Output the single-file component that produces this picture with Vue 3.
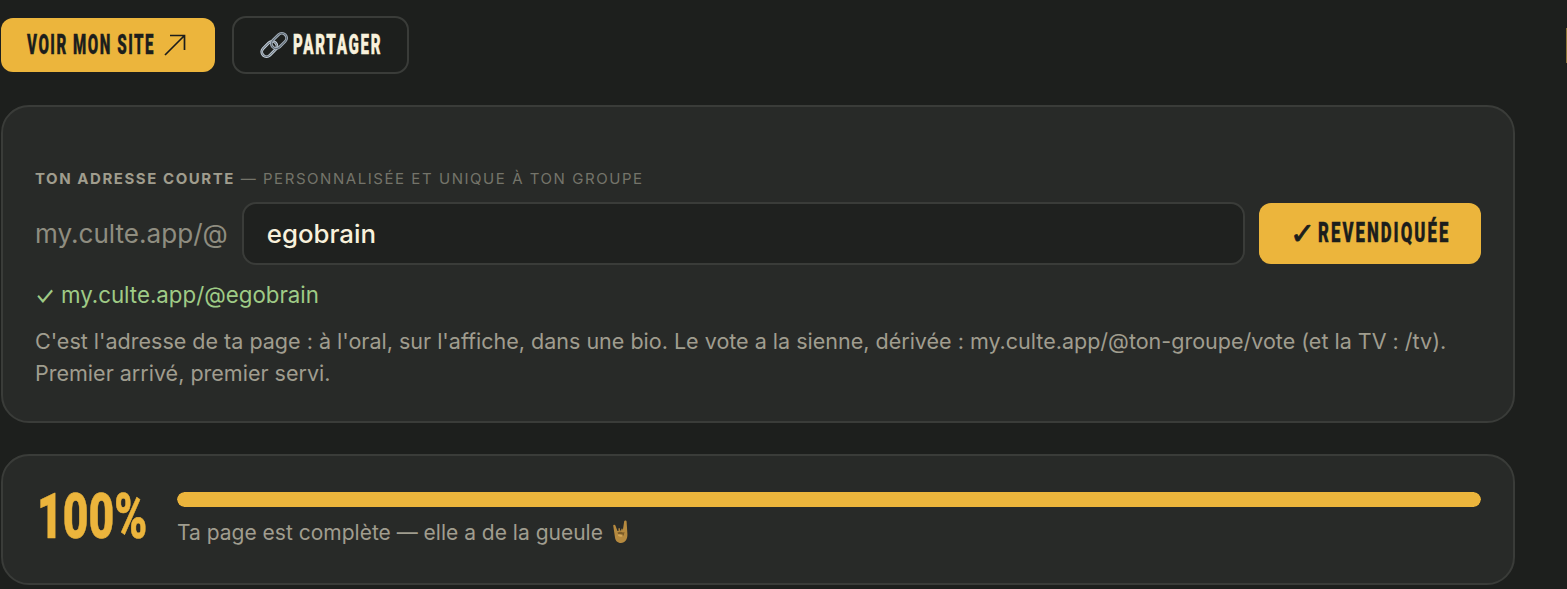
<script setup>
const title = 'TON ADRESSE COURTE'
const subtitle = ' — PERSONNALISÉE ET UNIQUE À TON GROUPE'
</script>

<template>
  <div class="page">
    <span class="sliver"></span>
    <div class="actions">
      <a class="btn primary view"><span class="cond c-view">VOIR MON SITE</span>
        <svg class="arrow" width="22" height="22" viewBox="0 0 22 22" fill="none" stroke="#1c1e1c" stroke-width="1.700"><path d="M1 21 20.500 1.500M6 1.500h14.500V16"/></svg>
      </a>
      <a class="btn ghost">
        <svg class="link" width="28" height="28" viewBox="0 0 28 28" fill="none">
          <g transform="rotate(-45 9 18)">
            <rect x="0.500" y="13.500" width="17.500" height="9.500" rx="4.750" stroke="#c9d4de" stroke-width="2.800"/>
            <rect x="0.500" y="13.500" width="17.500" height="9.500" rx="4.750" stroke="#6d7883" stroke-width="1"/>
          </g>
          <g transform="rotate(-45 19 9.500)">
            <rect x="10" y="5" width="17.500" height="9.500" rx="4.750" stroke="#aab6c1" stroke-width="2.800"/>
            <rect x="10" y="5" width="17.500" height="9.500" rx="4.750" stroke="#5d6873" stroke-width="1"/>
          </g>
        </svg>
        <span class="cond c-share">PARTAGER</span>
      </a>
    </div>

    <section class="card address">
      <div class="label"><b>{{ title }}</b>{{ subtitle }}</div>
      <div class="row">
        <span class="prefix">my.culte.app/@</span>
        <input class="field" value="egobrain" />
        <button class="btn primary claim"><span class="check">✓</span><span class="cond c-claim">REVENDIQUÉE</span></button>
      </div>
      <div class="ok"><span class="ok-mark">✓</span> my.culte.app/@egobrain</div>
      <p class="help">C'est l'adresse de ta page : à l'oral, sur l'affiche, dans une bio. Le vote a la sienne, dérivée : my.culte.app/@ton-groupe/vote (et la TV : /tv). Premier arrivé, premier servi.</p>
    </section>

    <section class="card progress">
      <div class="pct"><span class="pct-text">100%</span></div>
      <div class="meter">
        <div class="track"><div class="fill" style="width: 100%"></div></div>
        <div class="note">Ta page est complète — elle a de la gueule
          <svg class="horns" width="17" height="24" viewBox="0 0 17 24">
            <path fill="#b68a3f" d="M1.200 5.500c.1-1 1.900-1.200 2.200-.1L5.500 11h1V8.500c.1-.8 1.100-.8 1.300 0l.2 2h1.200l.2-1.500c.1-.8 1-.8 1.200 0l.2 1.500L12.200 1.200c.2-1.100 2.300-1 2.400.2L15.400 14c.2 5.500-2.300 9-6.400 9-3.600 0-5.500-2.300-6-5.500z"/>
            <path fill="#7d5d29" d="M5.500 12.500c1.800-1 4-1 5.500 0l1.500-.5-.8 3.500c-1.500.7-3.700.5-5-.3z"/>
            <path fill="#d3a657" d="M5.800 14.500c1.500-.5 3.500-.4 5 .3l-.6 1.700c-1.400.4-2.800.2-4-.4z"/>
          </svg>
        </div>
      </div>
    </section>
  </div>
</template>

<style>
html, body { margin: 0; background: #1d1f1d; }
</style>

<style scoped>
.page { position: relative; box-sizing: border-box; width: 1567px; height: 589px; overflow: hidden; padding: 16px 0 0 1px; background: #1d1f1d; font-family: Inter, "Liberation Sans", sans-serif; font-variant-ligatures: no-contextual; }
.sliver { position: absolute; right: 0; top: 28px; width: 1px; height: 35px; background: #8a7236; }
.actions { display: flex; align-items: center; gap: 17px; height: 58px; }
.btn { display: inline-flex; align-items: center; box-sizing: border-box; font-family: Roboto, "Liberation Sans", sans-serif; font-weight: 900; cursor: pointer; }
.cond { display: inline-block; font-size: 27px; line-height: 1; white-space: nowrap; transform-origin: left center; -webkit-text-stroke: .4px currentColor; }
.c-view { width: 128px; letter-spacing: 2.700px; transform: scaleX(.56); }
.c-share { width: 88px; letter-spacing: 3px; transform: scaleX(.56); }
.c-claim { width: 130px; letter-spacing: 3.300px; transform: scaleX(.62); }
.primary { background: #ecb53c; color: #1c1e1c; border: none; border-radius: 12px; }
.view { width: 214px; height: 54px; padding-left: 26px; gap: 9px; }
.ghost { width: 177px; height: 58px; padding-left: 26px; border: 2px solid #3a3c39; border-radius: 14px; color: #f8f1dc; gap: 5px; }
.card { box-sizing: border-box; width: 1514px; background: #282a28; border: 2px solid #3a3c39; border-radius: 28px; }
.address { height: 318px; margin-top: 31px; padding: 62px 32px 0; }
.label { font-size: 15px; line-height: 20px; letter-spacing: 1.550px; color: #74746a; }
.label b { color: #a09d8e; font-weight: 700; }
.row { display: flex; align-items: center; gap: 14px; margin-top: 13px; }
.prefix { font-size: 26.100px; color: #8f8d80; white-space: nowrap; }
.field { flex: 1; min-width: 0; height: 63px; box-sizing: border-box; padding: 0 23px; background: #1f211f; border: 2px solid #3a3c39; border-radius: 14px; color: #f8f1dc; font: 500 25.800px Inter, sans-serif; outline: none; }
.claim { width: 222px; height: 61px; padding-left: 31px; gap: 9px; }
.check { width: 19px; font-size: 30px; line-height: 1; font-family: "DejaVu Sans", sans-serif; font-weight: 700; -webkit-text-stroke: .8px #1c1e1c; }
.ok { margin-top: 15px; font-size: 22.300px; line-height: 30px; color: #9fcb86; }
.ok-mark { display: inline-block; transform: scaleY(1.2); }
.help { margin: 15px 0 0; font-size: 21.530px; line-height: 32px; color: #a09d8f; }
.progress { display: flex; align-items: center; gap: 30px; height: 131px; margin-top: 31px; padding: 0 32px 0 34px; }
.pct { width: 110px; padding-bottom: 6px; font-family: Roboto, "Liberation Sans", sans-serif; font-weight: 900; font-size: 63px; color: #ecb53c; line-height: 1; }
.pct-text { display: inline-block; transform: scaleX(.705); transform-origin: left center; -webkit-text-stroke: .6px currentColor; }
.meter { flex: 1; min-width: 0; }
.track { height: 15px; border-radius: 8px; background: #1d1f1d; overflow: hidden; }
.fill { height: 100%; background: #ecb53c; border-radius: 8px; }
.note { margin-top: 12px; font-size: 21px; line-height: 28px; color: #a09d8f; display: flex; align-items: center; gap: 9px; }
.horns { margin-top: -3px; }
</style>
